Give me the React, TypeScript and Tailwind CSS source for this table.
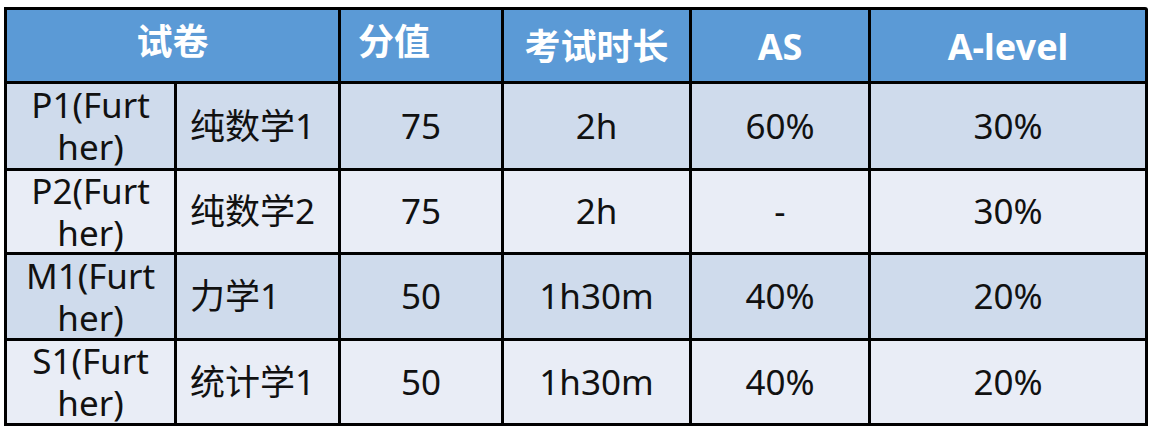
const rows = [
    { code: "P1(Furt", tail: "her)", name: "纯数学1", score: "75", time: "2h", as: "60%", al: "30%" },
    { code: "P2(Furt", tail: "her)", name: "纯数学2", score: "75", time: "2h", as: "-", al: "30%" },
    { code: "M1(Furt", tail: "her)", name: "力学1", score: "50", time: "1h30m", as: "40%", al: "20%" },
    { code: "S1(Furt", tail: "her)", name: "统计学1", score: "50", time: "1h30m", as: "40%", al: "20%" },
];

function Cell({ odd, className, children }: { odd: boolean; className?: string; children: React.ReactNode }) {
    return (
        <div
            className={
                (odd ? "bg-[#cfdbec] " : "bg-[#e9edf6] ") +
                "flex items-center text-[35px] text-[#111] " +
                (className ?? "justify-center")
            }
        >
            {children}
        </div>
    );
}

export default function App() {
    return (
        <div
            className="w-[1156px] h-[432px] bg-white pt-[7px] pl-[4px]"
            style={{ fontFamily: '"Noto Sans", "Noto Sans CJK SC", sans-serif' }}
        >
            <div className="grid w-[1144px] grid-cols-[167px_161px_160px_185px_176px_274px] grid-rows-[71px_84px_81px_83px_82px] gap-[3px] rounded-tr-[3px] bg-black p-[3px]">
                <div className="col-span-2 flex items-center justify-center bg-[#5b9ad6] pb-[7px] text-[36px] font-bold text-white">
                    试卷
                </div>
                <div className="flex items-center bg-[#5b9ad6] pb-[8px] pl-[17px] text-[36px] font-bold text-white">
                    分值
                </div>
                <div className="flex items-center justify-center bg-[#5b9ad6] pt-[2px] text-[36px] font-bold text-white">
                    考试时长
                </div>
                <div className="flex items-center justify-center bg-[#5b9ad6] pt-[2px] text-[36px] font-bold text-white">
                    AS
                </div>
                <div className="flex items-center justify-center bg-[#5b9ad6] pt-[2px] text-[36px] font-bold text-white">
                    A-level
                </div>

                {rows.map((r, i) => {
                    const odd = i % 2 === 0;
                    return [
                        <Cell key={r.code + "c"} odd={odd} className="justify-center text-center leading-[42px]">
                            <span>
                                {r.code}
                                <br />
                                {r.tail}
                            </span>
                        </Cell>,
                        <Cell key={r.code + "n"} odd={odd} className="justify-start pl-[13px]">
                            {r.name}
                        </Cell>,
                        <Cell key={r.code + "s"} odd={odd}>{r.score}</Cell>,
                        <Cell key={r.code + "t"} odd={odd}>{r.time}</Cell>,
                        <Cell key={r.code + "a"} odd={odd}>{r.as}</Cell>,
                        <Cell key={r.code + "l"} odd={odd}>{r.al}</Cell>,
                    ];
                })}
            </div>
        </div>
    );
}
